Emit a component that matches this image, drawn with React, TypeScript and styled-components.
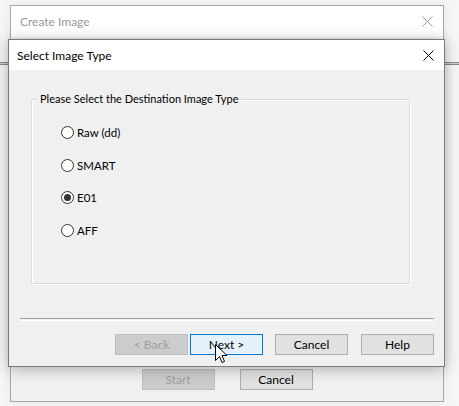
import React from "react";
import styled, { createGlobalStyle } from "styled-components";

const GlobalStyle = createGlobalStyle`
  html, body { margin: 0; padding: 0; background: #f5f5f5; }
  body { font-family: "Segoe UI", Lato, "Liberation Sans", Arial, sans-serif; }
`;

const Desktop = styled.div`
  position: relative;
  width: 459px;
  height: 406px;
  overflow: hidden;
  background: #f6f6f6;
`;

const BackRule = styled.div`
  position: absolute;
  left: 0;
  right: 0;
  top: 62px;
  height: 1px;
  border-top: 1px solid #8a8a8a;
  border-bottom: 1px solid #8a8a8a;
  background: #d0d0d0;
`;

const OuterWindow = styled.div`
  position: absolute;
  left: 10px;
  top: 5px;
  width: 432px;
  height: 395px;
  border: 1px solid #a8a8a8;
  background: #f0f0f0;
  display: flex;
  flex-direction: column;
  box-shadow: 0 0 10px rgba(0, 0, 0, 0.08);
`;

const TitleBar = styled.div<{ $h: number; $inactive?: boolean }>`
  height: ${(p) => p.$h}px;
  flex: 0 0 auto;
  background: #ffffff;
  display: flex;
  align-items: center;
  justify-content: space-between;
  padding: 0 10px 0 ${(p) => (p.$inactive ? 9 : 8)}px;
  font-size: 12px;
  color: ${(p) => (p.$inactive ? "#9a9a9a" : "#000000")};
`;

const CloseIcon = ({ color }: { color: string }) => (
  <svg width="11" height="11" viewBox="0 0 11 11">
    <path d="M0.5 0.5 L10.5 10.5 M10.5 0.5 L0.5 10.5" stroke={color} strokeWidth="1" fill="none" />
  </svg>
);

const OuterBody = styled.div`
  flex: 1;
  display: flex;
  flex-direction: column;
  justify-content: flex-end;
`;

const OuterFooter = styled.div`
  display: flex;
  justify-content: center;
  gap: 25px;
  padding-bottom: 11px;
`;

const Button = styled.div<{ $variant?: "disabled" | "default" | "normal" }>`
  box-sizing: border-box;
  width: 73px;
  height: 21px;
  display: flex;
  align-items: center;
  justify-content: center;
  font-size: 12px;
  border: 1px solid
    ${(p) =>
      p.$variant === "disabled" ? "#bfbfbf" : p.$variant === "default" ? "#0078d7" : "#adadad"};
  background: ${(p) =>
    p.$variant === "disabled" ? "#cccccc" : p.$variant === "default" ? "#e5f1fb" : "#e1e1e1"};
  color: ${(p) => (p.$variant === "disabled" ? "#a0a0a0" : "#000000")};
  box-shadow: ${(p) => (p.$variant === "default" ? "inset 0 0 0 1px #e5f1fb" : "none")};
`;

const Dialog = styled.div`
  position: absolute;
  left: 8px;
  top: 39px;
  width: 435px;
  height: 326px;
  border: 1px solid #7a7a7a;
  background: #f0f0f0;
  display: flex;
  flex-direction: column;
  box-shadow: 0 2px 14px rgba(0, 0, 0, 0.28);
`;

const DialogBody = styled.div`
  flex: 1;
  display: flex;
  flex-direction: column;
  padding: 29px 0 11px 0;
`;

const GroupBox = styled.div`
  position: relative;
  margin: 0 34px 0 22px;
  height: 157px;
  border: 1px solid #dcdcdc;
  box-shadow: inset 1px 1px 0 #ffffff, 1px 1px 0 #ffffff;
  padding: 26px 0 0 29px;
`;

const Legend = styled.span`
  position: absolute;
  left: 6px;
  top: -9px;
  padding: 0 2px;
  background: #f0f0f0;
  font-size: 11px;
  line-height: 16px;
  color: #000;
`;

const RadioList = styled.div`
  display: flex;
  flex-direction: column;
  gap: 19.7px;
`;

const RadioRow = styled.div`
  display: flex;
  align-items: center;
  gap: 3px;
  height: 13px;
  font-size: 11.5px;
  line-height: 13px;
  color: #000;
`;

const RadioCircle = styled.span<{ $checked?: boolean }>`
  box-sizing: border-box;
  width: 13px;
  height: 13px;
  border-radius: 50%;
  border: 1px solid #333333;
  background: #ffffff;
  display: flex;
  align-items: center;
  justify-content: center;
  &::after {
    content: "";
    width: 7px;
    height: 7px;
    border-radius: 50%;
    background: ${(p) => (p.$checked ? "#333333" : "transparent")};
  }
`;

const Spacer = styled.div`
  flex: 1;
`;

const Separator = styled.div`
  margin: 0 10px 0 11px;
  height: 1px;
  border-top: 1px solid #a0a0a0;
  border-bottom: 1px solid #ffffff;
`;

const ButtonRow = styled.div`
  display: flex;
  justify-content: flex-end;
  margin: 13px 10px 0 0;
`;

const Gap = styled.div<{ $w: number }>`
  width: ${(p) => p.$w}px;
`;

const Cursor = styled.svg`
  position: absolute;
  left: 215px;
  top: 344px;
`;

const options = [
  { label: "Raw (dd)", checked: false },
  { label: "SMART", checked: false },
  { label: "E01", checked: true },
  { label: "AFF", checked: false },
];

export default function App() {
  return (
    <>
      <GlobalStyle />
      <Desktop>
        <BackRule />
        <OuterWindow>
          <TitleBar $h={31} $inactive>
            <span>Create Image</span>
            <CloseIcon color="#9a9a9a" />
          </TitleBar>
          <OuterBody>
            <OuterFooter>
              <Button $variant="disabled">Start</Button>
              <Button $variant="normal">Cancel</Button>
            </OuterFooter>
          </OuterBody>
        </OuterWindow>
        <Dialog>
          <TitleBar $h={30}>
            <span>Select Image Type</span>
            <CloseIcon color="#000000" />
          </TitleBar>
          <DialogBody>
            <GroupBox>
              <Legend>Please Select the Destination Image Type</Legend>
              <RadioList>
                {options.map((o) => (
                  <RadioRow key={o.label}>
                    <RadioCircle $checked={o.checked} />
                    <span>{o.label}</span>
                  </RadioRow>
                ))}
              </RadioList>
            </GroupBox>
            <Spacer />
            <Separator />
            <ButtonRow>
              <Button $variant="disabled">&lt; Back</Button>
              <Gap $w={2} />
              <Button $variant="default">Next &gt;</Button>
              <Gap $w={12} />
              <Button $variant="normal">Cancel</Button>
              <Gap $w={13} />
              <Button $variant="normal">Help</Button>
            </ButtonRow>
          </DialogBody>
        </Dialog>
        <Cursor width="13" height="20" viewBox="0 0 13 20">
          <path
            d="M0.5 0.5 L0.5 16.5 L4.5 12.5 L7 18.5 L9.5 17.5 L7 11.5 L12 11.5 Z"
            fill="#ffffff"
            stroke="#000000"
            strokeWidth="1"
            strokeLinejoin="miter"
          />
        </Cursor>
      </Desktop>
    </>
  );
}
